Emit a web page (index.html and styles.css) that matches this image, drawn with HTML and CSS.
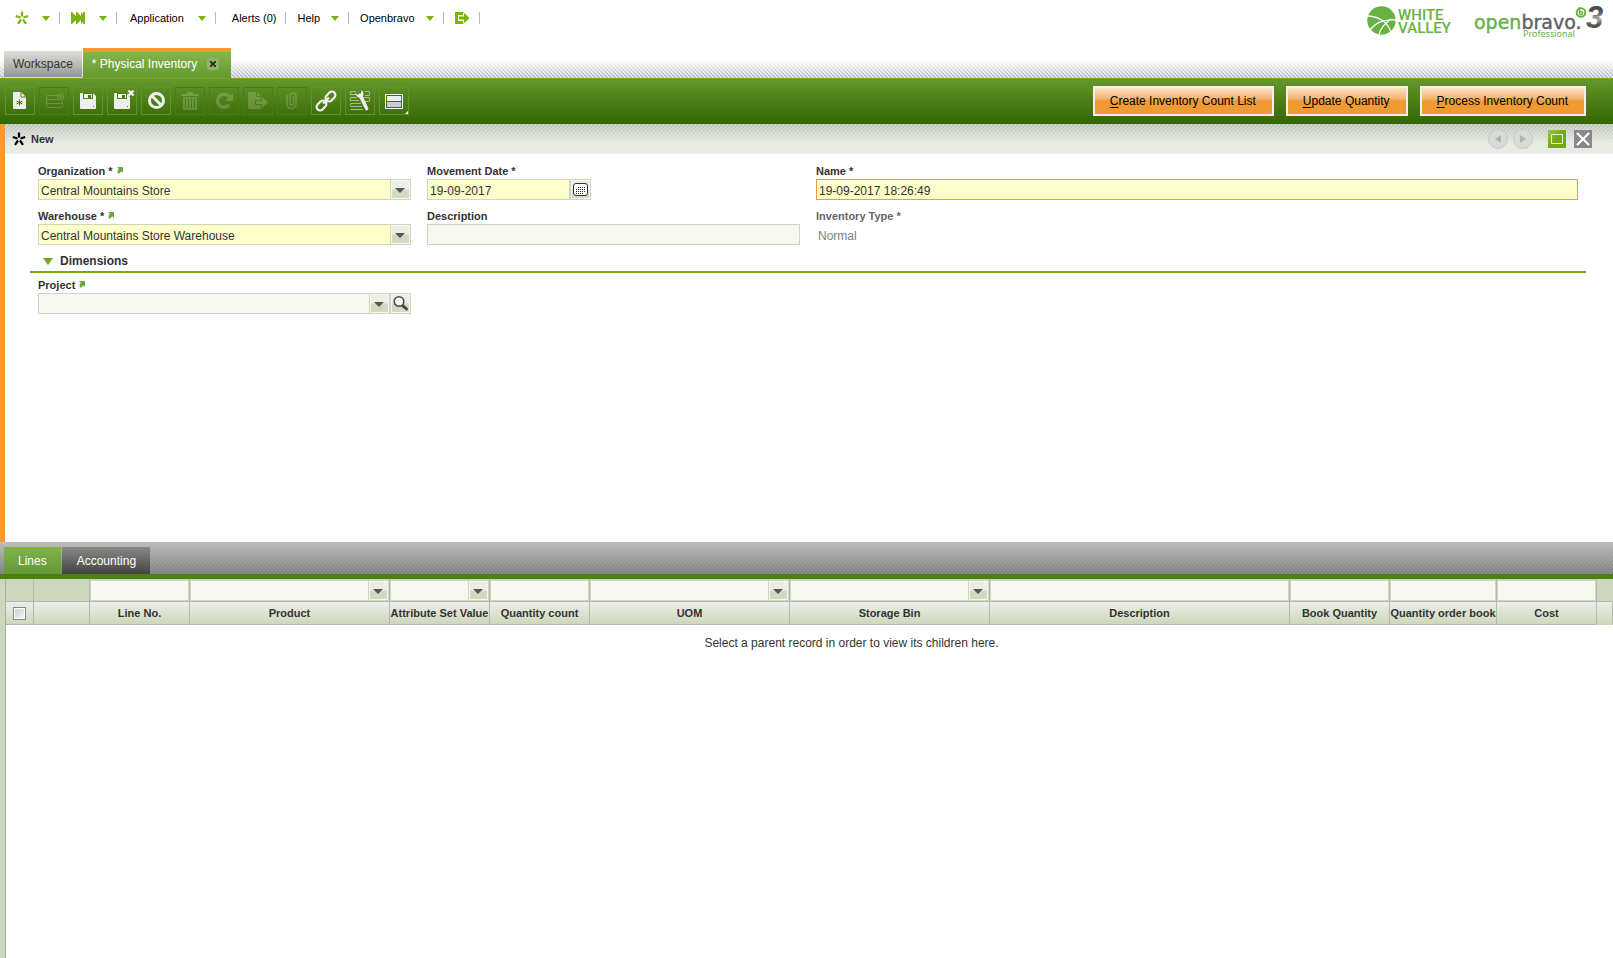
FILE: index.html
```html
<!DOCTYPE html>
<html lang="en">
<head>
    <meta charset="UTF-8">
    <meta name="viewport" content="width=device-width, initial-scale=1.0">
    <title>Physical Inventory</title>
    <link rel="stylesheet" href="styles.css">
</head>
<body>
    <!-- Top navigation -->
    <header class="top-bar">
        <nav class="nav">
            <button class="nav-item quick-item" aria-label="Create new">
                <svg width="14" height="14" viewBox="0 0 14 14" stroke="#7ab40c" stroke-width="2.2"><path d="M7 5.500V0.500M8.500 6.500L13.200 5M8 8.500L11 12.800M6 8.500L3 12.800M5.500 6.500L0.800 5"/></svg>
                <span class="caret"></span>
            </button>
            <button class="nav-item quick-item launch-item" aria-label="Quick launch">
                <svg width="15" height="12" viewBox="0 0 15 12" fill="#7ab40c"><path d="M0 0H1L7 6L1 12H0ZM5 0H6L12 6L6 12H5ZM10 0L12 2V0H14V12H12V10L10 12V8L12 6L10 4Z"/></svg>
                <span class="caret"></span>
            </button>
            <button class="nav-item app-item">Application <span class="caret"></span></button>
            <button class="nav-item alerts-item">Alerts (0)</button>
            <button class="nav-item">Help <span class="caret"></span></button>
            <button class="nav-item">Openbravo <span class="caret"></span></button>
            <button class="nav-item" aria-label="Log out">
                <svg width="15" height="12" viewBox="0 0 15 12" fill="#7ab40c"><path d="M0 0H9V3H3V9H9V12H0Z"/><path d="M4 4.500H9V1.500H10L14.500 6L10 10.500H9V7.500H4Z" stroke="#fff" stroke-width="2" paint-order="stroke"/></svg>
            </button>
        </nav>
        <div class="logos">
            <div class="company-logo">
                <svg width="29" height="29" viewBox="0 0 29 29"><circle cx="14.500" cy="14.500" r="14.200" fill="#68b143"/><g fill="none" stroke="#fff" stroke-width="1.300"><path d="M0 10C9 10 20 14 24 26"/><path d="M3 24C8 17 17 13 29 14"/><path d="M12 29C13 23 17 18 24 13"/></g></svg>
                <span class="company-name">WHITE<br>VALLEY</span>
            </div>
            <svg class="product-logo" width="132" height="36" viewBox="0 0 132 36">
                <defs><linearGradient id="three" x1="0" y1="0" x2="0" y2="1"><stop offset="0.300" stop-color="#4c4d50"/><stop offset="0.550" stop-color="#aaa"/><stop offset="0.700" stop-color="#55565a"/></linearGradient></defs>
                <text class="brand" x="0" y="23"><tspan class="brand-open">open</tspan><tspan class="brand-bravo">bravo.</tspan></text>
                <text class="edition" x="49" y="31">Professional</text>
                <g fill="none" stroke="#68b143" stroke-width="2"><circle cx="107" cy="6.500" r="4.300"/><path d="M105.500 1V7C105.500 9 108.500 9 108.500 7C108.500 5 106.500 5 105.500 6.500" stroke-width="1.500"/></g>
                <text class="version" x="112" y="22" fill="url(#three)">3</text>
            </svg>
        </div>
    </header>

    <div class="main-tabs">
        <button class="main-tab">Workspace</button>
        <div class="main-tab active">
            <span>* Physical Inventory</span>
            <button class="tab-close" aria-label="Close tab"><svg width="6" height="6" viewBox="0 0 6 6" stroke="#222" stroke-width="1.600"><path d="M0 0L6 6M6 0L0 6"/></svg></button>
        </div>
    </div>

    <!-- Toolbar -->
    <div class="toolbar">
        <div class="tools">
            <button class="tool" aria-label="New record"><svg viewBox="0 0 30 28"><path class="fill" d="M9 5H16L21 10V21Q21 22 20 22H9Q8 22 8 21V6Q8 5 9 5Z"/><path d="M16 5V10H21" fill="none" stroke="#55851c"/><path d="M14.500 12.500V18.500M11.500 14L17.500 17M17.500 14L11.500 17" stroke="#3f7a08" stroke-width="1"/></svg></button>
            <button class="tool" disabled aria-label="New in grid"><svg viewBox="0 0 30 28"><path class="line" d="M20 8.500H8.500Q7.500 8.500 7.500 9.500V19.500Q7.500 20.500 8.500 20.500H22.500Q23.500 20.500 23.500 19.500V14M7.500 12.500H19M7.500 16.500H23.500"/><circle class="line" cx="21.500" cy="10" r="3"/><path class="line" d="M21.500 8V12M19.500 10H23.500"/></svg></button>
            <button class="tool" aria-label="Save"><svg viewBox="0 0 30 28"><path class="fill" d="M8 6H20L23 9V21Q23 22 22 22H8Q7 22 7 21V7Q7 6 8 6Z"/><path d="M10 6H20V12H10Z" fill="#4a7f16"/><path d="M11 7H19V11H11Z" fill="#f5f5f5"/><path d="M15 8H18V11H15ZM20 19H21V20H20Z" fill="#4a7f16"/></svg></button>
            <button class="tool" aria-label="Save and close"><svg viewBox="0 0 30 28"><path class="fill" d="M8 6H20L23 9V21Q23 22 22 22H8Q7 22 7 21V7Q7 6 8 6Z"/><path d="M10 6H20V12H10Z" fill="#4a7f16"/><path d="M11 7H19V11H11Z" fill="#f5f5f5"/><path d="M15 8H18V11H15ZM20 19H21V20H20Z" fill="#4a7f16"/><path d="M21.500 3.500L26.500 8.500M26.500 3.500L21.500 8.500" stroke="#4a7f16" stroke-width="4"/><path d="M21.500 3.500L26.500 8.500M26.500 3.500L21.500 8.500" stroke="#fff" stroke-width="2.400"/></svg></button>
            <button class="tool" aria-label="Undo"><svg viewBox="0 0 30 28"><circle cx="15.500" cy="13.500" r="7" fill="none" stroke="#eee" stroke-width="3"/><path d="M11 9L20 18" stroke="#eee" stroke-width="3"/></svg></button>
            <button class="tool" disabled aria-label="Delete"><svg viewBox="0 0 30 28"><path class="fill" d="M12 5H18V7H24V9H6V7H12ZM8 10H22V23H8ZM10 11V21H11V11ZM13 11V21H14V11ZM16 11V21H17V11ZM19 11V21H20V11Z" fill-rule="evenodd"/></svg></button>
            <button class="tool" disabled aria-label="Refresh"><svg viewBox="0 0 30 28"><path d="M20 18A6.500 6.500 0 1 1 20 9.500" fill="none" stroke="#eee" stroke-width="3.500"/><path class="fill" d="M24 6V14H16Z"/></svg></button>
            <button class="tool" disabled aria-label="Export"><svg viewBox="0 0 30 28"><path class="fill" d="M6 5H13V10H18V13H12V18H18V22H6Q5 22 5 21V6Q5 5 6 5ZM14 5L18 9H14ZM13 14H19V10L25 15.500L19 21V17H13Z"/></svg></button>
            <button class="tool" disabled aria-label="Attachments"><svg viewBox="0 0 30 28"><path d="M10 8V17C10 23 19 23 19 17V9C19 5 13 5 13 9V16C13 19 16.500 19 16.500 16V9" fill="none" stroke="#eee" stroke-width="1.600"/></svg></button>
            <button class="tool" aria-label="Linked items"><svg viewBox="0 0 30 28"><g fill="none" stroke="#eee" stroke-width="2.200"><rect x="14" y="6" width="11" height="7" rx="3.500" transform="rotate(-45 19.500 9.500)"/><rect x="5" y="15" width="11" height="7" rx="3.500" transform="rotate(-45 10.500 18.500)"/><path d="M12 16.500L18 10.500"/></g></svg></button>
            <button class="tool" aria-label="Customize form"><svg viewBox="0 0 30 28"><path d="M5.500 8V4.500H11M5.500 7.500H11M24.500 8V4.500H20M20 8.500H24.500M5.500 14V10.500H12M5.500 13.500H14M24.500 14V10.500H18M19 14.500H24.500M5.500 18.500V16.500H16M5.500 19.500H17M5.500 22.500H18" fill="none" stroke="#a9b99a"/><path d="M13 3L14 6.500L16 6.500L16.500 3Q19.500 5 18 9.500L23.500 21.500Q22.500 24.500 20.500 23L14.500 11Q10.500 9 10.500 5.500L12.500 8L14 7Z" fill="#eee"/></svg></button>
            <button class="tool" aria-label="Switch view"><svg viewBox="0 0 30 28"><path d="M6.500 7.500H23.500V21.500H6.500Z" fill="#3e6d12" stroke="#fff"/><path class="fill" d="M8 9H22V14H8Z"/><path d="M8 15H22V20H8Z" fill="#ccc"/><path d="M29 24V27H26Z" fill="#fff"/></svg></button>
        </div>
        <div class="actions">
            <button class="action"><u>C</u>reate Inventory Count List</button>
            <button class="action"><u>U</u>pdate Quantity</button>
            <button class="action"><u>P</u>rocess Inventory Count</button>
        </div>
    </div>

    <!-- Header record form -->
    <main class="record">
        <div class="status-bar">
            <svg width="14" height="14" viewBox="0 0 14 14" stroke="#000" stroke-width="2.200"><path d="M7 5.500V0.500M8.500 6.500L13.200 5M8 8.500L11 12.800M6 8.500L3 12.800M5.500 6.500L0.800 5"/></svg>
            <span class="status-text">New</span>
            <div class="status-buttons">
                <button class="round" disabled aria-label="Previous"><svg width="6" height="8" viewBox="0 0 6 8"><path d="M6 0V8L0 4Z" fill="#b0b2ae"/></svg></button>
                <button class="round" disabled aria-label="Next"><svg width="6" height="8" viewBox="0 0 6 8"><path d="M0 0V8L6 4Z" fill="#b0b2ae"/></svg></button>
                <button class="square maximize" aria-label="Maximize"><svg width="12" height="10" viewBox="0 0 12 10"><path d="M0.500 0.500H11.500V9.500H0.500Z" fill="none" stroke="#e6f5cc"/></svg></button>
                <button class="square" aria-label="Close form"><svg width="14" height="14" viewBox="0 0 14 14"><path d="M1 1L13 13M13 1L1 13" stroke="#fff" stroke-width="2.200"/></svg></button>
            </div>
        </div>
        <form class="form">
            <div class="field">
                <label for="organization">Organization * <svg class="jump" viewBox="0 0 6 7"><path d="M0 0H6V6L4.500 4.500Q2.500 5 2 7Q0 6 0.500 4Q1 2.500 2 2Z"/></svg></label>
                <div class="control select"><select id="organization" class="required"><option>Central Mountains Store</option></select></div>
            </div>
            <div class="field">
                <label for="movement-date">Movement Date *</label>
                <div class="control date">
                    <input type="text" id="movement-date" class="required" value="19-09-2017">
                    <button type="button" class="picker" aria-label="Pick a date"><svg width="15" height="13" viewBox="0 0 15 13"><rect x="0.500" y="0.500" width="14" height="12" rx="2.500" fill="#fff" stroke="#333"/><path d="M5 4.500H12M3 6.500H12M3 8.500H12M3 10.500H10" stroke="#222" stroke-dasharray="1 1"/></svg></button>
                </div>
            </div>
            <div class="field wide">
                <label for="name">Name *</label>
                <div class="control"><input type="text" id="name" class="required focused" value="19-09-2017 18:26:49"></div>
            </div>
            <div class="field">
                <label for="warehouse">Warehouse * <svg class="jump" viewBox="0 0 6 7"><path d="M0 0H6V6L4.500 4.500Q2.500 5 2 7Q0 6 0.500 4Q1 2.500 2 2Z"/></svg></label>
                <div class="control select"><select id="warehouse" class="required"><option>Central Mountains Store Warehouse</option></select></div>
            </div>
            <div class="field">
                <label for="description">Description</label>
                <div class="control"><input type="text" id="description"></div>
            </div>
            <div class="field wide readonly">
                <label for="inventory-type">Inventory Type *</label>
                <div class="control"><input type="text" id="inventory-type" value="Normal" readonly></div>
            </div>
            <h2 class="section-title"><button type="button"><span class="section-arrow"></span>Dimensions</button></h2>
            <div class="field">
                <label for="project">Project <svg class="jump" viewBox="0 0 6 7"><path d="M0 0H6V6L4.500 4.500Q2.500 5 2 7Q0 6 0.500 4Q1 2.500 2 2Z"/></svg></label>
                <div class="control">
                    <div class="control select"><select id="project"><option></option></select></div>
                    <button type="button" class="picker" aria-label="Search projects"><svg width="17" height="17" viewBox="0 0 17 17"><path d="M10 10L14.500 14" stroke="#444" stroke-width="3" stroke-linecap="round"/><circle cx="7" cy="6.500" r="4.800" fill="#f4f6f2" stroke="#4a4a4a" stroke-width="1.600"/></svg></button>
                </div>
            </div>
        </form>
    </main>

    <!-- Child tabs and lines grid -->
    <div class="child-tabs">
        <button class="child-tab active">Lines</button>
        <button class="child-tab">Accounting</button>
    </div>
    <section class="lines">
        <table class="grid">
            <colgroup>
                <col class="col-check"><col class="col-actions"><col class="col-s"><col class="col-m"><col class="col-s"><col class="col-s"><col class="col-m"><col class="col-m"><col><col class="col-s"><col class="col-order"><col class="col-s"><col class="col-scroll">
            </colgroup>
            <thead>
                <tr class="filters">
                    <td></td>
                    <td></td>
                    <td><input type="text" aria-label="Filter Line No."></td>
                    <td><div class="control select"><select aria-label="Filter Product"><option></option></select></div></td>
                    <td><div class="control select"><select aria-label="Filter Attribute Set Value"><option></option></select></div></td>
                    <td><input type="text" aria-label="Filter Quantity count"></td>
                    <td><div class="control select"><select aria-label="Filter UOM"><option></option></select></div></td>
                    <td><div class="control select"><select aria-label="Filter Storage Bin"><option></option></select></div></td>
                    <td><input type="text" aria-label="Filter Description"></td>
                    <td><input type="text" aria-label="Filter Book Quantity"></td>
                    <td><input type="text" aria-label="Filter Quantity order book"></td>
                    <td><input type="text" aria-label="Filter Cost"></td>
                    <td></td>
                </tr>
                <tr class="headings">
                    <th><input type="checkbox" class="select-all" aria-label="Select all"></th>
                    <th></th>
                    <th>Line No.</th>
                    <th>Product</th>
                    <th>Attribute Set Value</th>
                    <th>Quantity count</th>
                    <th>UOM</th>
                    <th>Storage Bin</th>
                    <th>Description</th>
                    <th>Book Quantity</th>
                    <th>Quantity order book</th>
                    <th>Cost</th>
                    <th></th>
                </tr>
            </thead>
            <tbody>
                <tr>
                    <td colspan="2"></td>
                    <td colspan="11" class="empty">Select a parent record in order to view its children here.</td>
                </tr>
            </tbody>
        </table>
    </section>
</body>
</html>
```
FILE: styles.css
```css
* {
    box-sizing: border-box;
}

body {
    margin: 0;
    min-height: 100vh;
    display: flex;
    flex-direction: column;
    background-color: #fff;
    font-family: "Liberation Sans", Arial, sans-serif;
    font-size: 12px;
    color: #333;
}

button, input, select {
    font: inherit;
    color: inherit;
    margin: 0;
    border-radius: 0;
}

button {
    padding: 0;
    border: none;
    background: none;
    cursor: pointer;
}

svg {
    display: block;
}

/* Top bar */
.top-bar {
    display: flex;
    justify-content: space-between;
    height: 48px;
}

.nav {
    display: flex;
    align-items: center;
    height: 36px;
    padding-left: 1px;
    font-size: 11px;
}

.nav-item {
    display: flex;
    align-items: center;
    gap: 11px;
    height: 12px;
    padding: 0 9px 0 11px;
    border-right: 1px solid #bbb;
    color: #000;
}

.quick-item {
    padding-left: 14px;
    gap: 13px;
}

.launch-item {
    padding-left: 11px;
}

.app-item {
    gap: 14px;
    padding-left: 13px;
}

.alerts-item {
    padding-left: 16px;
}

.caret {
    border: 4px solid transparent;
    border-top-width: 5px;
    border-top-color: #7ab40c;
    border-bottom: none;
}

.logos {
    display: flex;
    gap: 23px;
    padding: 6px 7px 0 0;
}

.company-logo {
    display: flex;
    gap: 2px;
}

.company-name {
    padding-top: 3px;
    font-family: Roboto, sans-serif;
    font-size: 15px;
    font-weight: 500;
    line-height: 13px;
    color: #68b143;
}

.product-logo {
    overflow: visible;
}

.brand {
    font: 19px "DejaVu Sans", sans-serif;
}

.brand-open {
    fill: #68b143;
    stroke: #68b143;
    stroke-width: 0.4px;
}

.brand-bravo {
    fill: #5f6063;
    stroke: #5f6063;
    stroke-width: 0.4px;
}

.edition {
    font: 9px "Noto Sans", sans-serif;
    fill: #68b143;
}

.version {
    font: italic bold 31px "Liberation Sans", sans-serif;
}

/* Main tabs */
.main-tabs {
    display: flex;
    align-items: flex-end;
    gap: 1px;
    height: 30px;
    padding-left: 4px;
    background: linear-gradient(#fff 40%, rgba(255, 255, 255, 0)), linear-gradient(45deg, #bbb 25%, #e2e2e2 25% 50%, #bbb 50% 75%, #e2e2e2 75%);
    background-size: auto, 4px 4px;
}

.main-tab {
    height: 27px;
    padding: 0 9px;
    border-bottom: 1px solid #ddd;
    background: linear-gradient(#dde0d9, #94978f);
    line-height: 25px;
}

.main-tab.active {
    display: flex;
    align-items: center;
    gap: 10px;
    height: 30px;
    padding: 0 12px 2px 9px;
    border-top: 4px solid #fd9730;
    border-bottom: none;
    background: linear-gradient(#86b44c, #649a31);
    color: #fff;
}

.tab-close {
    display: flex;
    align-items: center;
    justify-content: center;
    width: 12px;
    height: 12px;
    border-radius: 3px;
    background-color: #8fb766;
}

/* Toolbar */
.toolbar {
    display: flex;
    align-items: center;
    justify-content: space-between;
    height: 46px;
    padding: 0 27px 1px 5px;
    border-top: 1px solid #7aa81c;
    background: linear-gradient(#65972c, #356500);
}

.tools {
    display: flex;
    gap: 4px;
}

.tool {
    width: 30px;
    height: 28px;
    border: 1px solid #61922b;
}

.tool svg {
    width: 30px;
    height: 28px;
    margin: -1px;
}

.tool .fill {
    fill: #eee;
}

.tool .line {
    fill: none;
    stroke: #eee;
}

.tool:disabled {
    border-color: #4c7c18;
}

.tool:disabled svg {
    opacity: 0.2;
}

.actions {
    display: flex;
    gap: 12px;
}

.action {
    height: 30px;
    padding: 0 16px 0 15px;
    border: 2px solid #f0f0f0;
    background: linear-gradient(#fbe0c2, #f4b676 40%, #f09a35 50%, #f09a35);
    color: #000;
}

.action u {
    text-underline-offset: 2px;
}

/* Record form */
.record {
    min-height: 418px;
    border-left: 5px solid #fd9730;
}

.status-bar {
    display: flex;
    align-items: center;
    gap: 5px;
    height: 30px;
    padding: 0 21px 0 7px;
    background: linear-gradient(rgba(232, 235, 228, 0), #e8ebe4 65%), linear-gradient(135deg, #babeb6 25%, #d2d5ce 25% 50%, #babeb6 50% 75%, #d2d5ce 75%);
    background-size: auto, 4px 4px;
}

.status-text {
    font-size: 11px;
    font-weight: bold;
}

.status-buttons {
    display: flex;
    align-items: center;
    gap: 5px;
    margin-left: auto;
}

.round, .square {
    display: flex;
    align-items: center;
    justify-content: center;
}

.round {
    width: 20px;
    height: 20px;
    border: 1px solid #c8cac6;
    border-radius: 50%;
    background-color: #d9dbd7;
}

.square {
    width: 18px;
    height: 18px;
    margin-left: 3px;
    background-color: #888;
}

.square.maximize {
    margin-left: 10px;
    background: linear-gradient(135deg, #9cc455, #72aa0e 50%);
}

.form {
    display: grid;
    grid-template-columns: repeat(4, 1fr);
    padding: 10px 27px 0 25px;
}

.field {
    height: 45px;
    padding: 0 8px;
}

.field.wide {
    grid-column: span 2;
}

.field label {
    display: flex;
    align-items: center;
    gap: 4px;
    height: 15px;
    padding-bottom: 2px;
    font-size: 11px;
    font-weight: bold;
}

.jump {
    width: 6px;
    height: 7px;
    fill: #68a83c;
}

.control {
    display: flex;
    flex: 1;
    min-width: 0;
}

.control input, .control select {
    width: 100%;
    height: 21px;
    padding: 2px 2px 0;
    border: 1px solid #cdd7bb;
    outline: none;
    appearance: none;
    background-color: #f5f7f0;
}

.control .required {
    background-color: #ffffcc;
}

.control .focused {
    border-color: #fd9730;
}

.control.date {
    width: 164px;
}

.readonly label {
    color: #666;
}

.readonly input {
    padding: 2px 1px 0;
    border-color: transparent;
    background: none;
    color: #808080;
}

/* Arrow box drawn over the right end of each drop-down */
.select {
    position: relative;
}

.select::before {
    content: "";
    position: absolute;
    top: 1px;
    right: 1px;
    bottom: 1px;
    width: 19px;
    border-left: 1px solid #cdd7bb;
    background: linear-gradient(#eceee6 45%, #d3d9c2 55%);
    box-shadow: inset 0 0 0 1px #f5f7f0;
    pointer-events: none;
}

.select::after {
    content: "";
    position: absolute;
    top: 9px;
    right: 6px;
    border: 5px solid transparent;
    border-top-color: #555;
    border-bottom: none;
    pointer-events: none;
}

.picker {
    display: flex;
    align-items: center;
    justify-content: center;
    flex: none;
    width: 21px;
    height: 21px;
    border: 1px solid #cdd7bb;
    background: linear-gradient(#eceee6 45%, #d3d9c2 55%);
    box-shadow: inset 0 0 0 1px #f5f7f0;
}

.section-title {
    grid-column: 1 / -1;
    height: 19px;
    margin: 0 0 5px;
    border-bottom: 2px solid #72a914;
    font-size: 12px;
}

.section-title button {
    display: flex;
    align-items: center;
    gap: 7px;
    padding-left: 13px;
}

.section-arrow {
    border: 5px solid transparent;
    border-top: 7px solid #72a914;
    border-bottom: none;
}

/* Child tabs */
.child-tabs {
    display: flex;
    align-items: flex-end;
    gap: 1px;
    height: 37px;
    padding-left: 4px;
    border-bottom: 5px solid #4a7f12;
    background: linear-gradient(#bdbdbd, rgba(150, 150, 150, 0.4)), linear-gradient(45deg, #6a6a6a 25%, #848484 25% 50%, #6a6a6a 50% 75%, #848484 75%);
    background-size: auto, 4px 4px;
}

.child-tab {
    height: 27px;
    padding: 0 14px 0 15px;
    background: linear-gradient(#888986, #444541);
    color: #fff;
}

.child-tab.active {
    padding-left: 14px;
    background: linear-gradient(#82b348, #64983a);
}

/* Lines grid */
.lines {
    flex: 1;
    border-left: 5px solid #cdd7bb;
}

.grid {
    width: 100%;
    border-left: 1px solid #aaaea3;
    border-spacing: 0;
    table-layout: fixed;
}

.lines, .grid {
    min-height: 379px;
}

.grid tbody td {
    padding: 11px 0 0;
    vertical-align: top;
}

.col-check {
    width: 28px;
}

.col-actions {
    width: 56px;
}

.col-s {
    width: 100px;
}

.col-m {
    width: 200px;
}

.col-order {
    width: 107px;
}

.col-scroll {
    width: 16px;
}

.filters td {
    height: 23px;
    padding: 1px 0 0;
    border-right: 1px solid #b4b8ae;
    border-bottom: 1px solid #b4b8ae;
    background-color: #cdd7bb;
}

.filters td:last-child {
    border-right-color: #cdd7bb;
}

.filters input, .filters select {
    display: block;
    width: 100%;
    height: 21px;
    padding: 0 2px;
    border: 1px solid #cdd7bb;
    outline: none;
    background-color: #f5f7f0;
}

.headings th {
    height: 23px;
    padding: 0;
    border-right: 1px solid #b4b8ae;
    border-bottom: 1px solid #b4b8ae;
    background: linear-gradient(#eceee9, #cdd7bb);
    font-size: 11px;
    white-space: nowrap;
}

.headings th:last-child {
    border-bottom-color: #cdd7bb;
}

.select-all {
    display: block;
    width: 13px;
    height: 13px;
    margin: 0 auto;
    appearance: none;
    border: 1px solid #888;
    background: linear-gradient(135deg, #c9ced3, #f6f6f6);
    box-shadow: inset 0 0 0 1px #fff;
}

.grid .empty {
    text-align: center;
}
```
